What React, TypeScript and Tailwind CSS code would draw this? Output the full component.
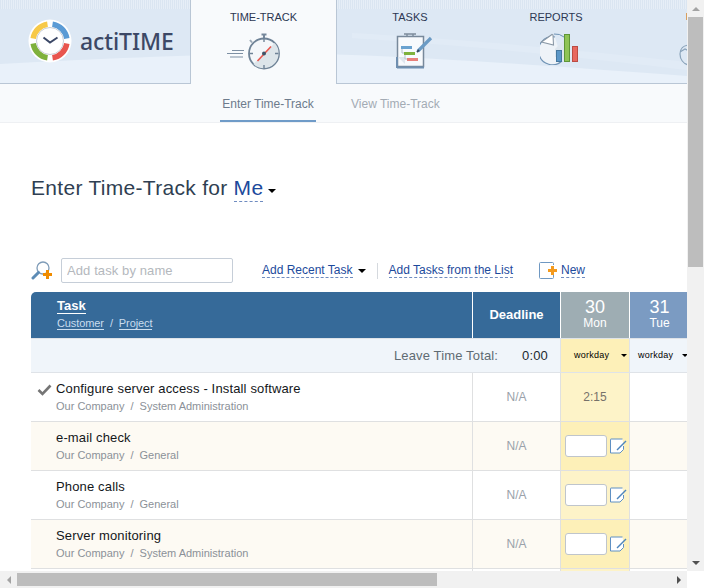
import type { ReactNode } from "react";

const sans = "font-['Liberation_Sans',Arial,sans-serif]";

function Logo() {
  return (
    <svg width="44" height="44" viewBox="0 0 44 44" className="shrink-0">
      <circle cx="22" cy="22" r="21.5" fill="#fff" />
      <g fill="none" strokeWidth="5.5">
        <path d="M5.2 19.5 A17 17 0 0 1 19.5 5.2" stroke="#f7c948" />
        <path d="M24.5 5.2 A17 17 0 0 1 38.8 19.5" stroke="#5b9bd5" />
        <path d="M38.8 24.5 A17 17 0 0 1 24.5 38.8" stroke="#e8554e" />
        <path d="M19.5 38.8 A17 17 0 0 1 5.2 24.5" stroke="#7fb13c" />
      </g>
      <circle cx="22" cy="22" r="13.5" fill="#fff" stroke="#c9ced6" strokeWidth="1" />
      <path d="M15.5 18.5 L22 23.5 L29.5 18.5" fill="none" stroke="#3b4766" strokeWidth="2" />
    </svg>
  );
}

function Stopwatch() {
  return (
    <svg width="54" height="38" viewBox="0 0 54 38">
      <path d="M5 17.5 H17 M0 20.5 H16 M3 24 H16" stroke="#7d8fa3" strokeWidth="1" fill="none" />
      <path d="M34.5 1.5 H39.5 M37 2 V5" stroke="#76889b" strokeWidth="2" fill="none" />
      <path d="M23 7 L25 9.5" stroke="#9aa8b6" strokeWidth="2" />
      <circle cx="37" cy="20.5" r="15" fill="#f4f7fa" stroke="#6f8397" strokeWidth="1.8" />
      <path d="M47.6 9.9 A15 15 0 0 1 26.4 31.1 Z" fill="#dde5ea" />
      <path d="M37 5.5 V9 M37 32 V35.5 M22.5 20.5 H26 M48 20.5 H51.5" stroke="#6f8397" strokeWidth="1.4" />
      <path d="M30.5 28 L44 13.5" stroke="#e8574f" strokeWidth="1.6" />
      <circle cx="37" cy="20.5" r="2" fill="#3e5468" />
    </svg>
  );
}

function Clipboard() {
  return (
    <svg width="38" height="36" viewBox="0 0 38 36">
      <path d="M1.5 3.5 H27.5 V33.5 H1.5 Z" fill="#f7fafd" stroke="#78899b" strokeWidth="1.5" />
      <path d="M1 34.5 H28 M1 24 V35" stroke="#6f8fb0" strokeWidth="2" />
      <path d="M8 1 H20 M11 3.5 V1 H17 V3.5" fill="none" stroke="#7c8b9b" strokeWidth="1.4" />
      <path d="M2 24 L9 24 L9 31 Z" fill="#dfe6ee" />
      <rect x="5" y="13" width="11" height="3" fill="#69a2d0" />
      <rect x="8" y="19" width="11" height="3" fill="#7fb13c" />
      <rect x="11" y="25" width="11" height="3" fill="#e8807a" />
      <path d="M6 16 V20 H8 M9 22 V26 H11" stroke="#b4bfca" fill="none" />
      <path d="M22 18 L35 5" stroke="#6b9bc4" strokeWidth="3.2" />
      <path d="M21 19 L23 17" stroke="#33465a" strokeWidth="2" />
    </svg>
  );
}

function ChartIcon() {
  return (
    <svg width="38" height="32" viewBox="0 0 38 32">
      <path d="M15 4 A14 14 0 1 0 22 28" fill="#eef3f8" stroke="#6f93b5" strokeWidth="1.2" />
      <path d="M1.5 9 L12 1.5 L13 2 L13.5 12 Z" fill="#fff" stroke="#8a98a6" strokeWidth="1.1" />
      <path d="M14 1 A14 14 0 0 1 24 4" stroke="#6f93b5" fill="none" />
      <path d="M15 16 L26 5 V24 H15 Z" fill="#dde6ee" />
      <rect x="16.5" y="17.5" width="5" height="11" fill="#5b97c7" stroke="#45789f" />
      <rect x="24.5" y="1.5" width="5" height="27" fill="#8fc455" stroke="#5f9636" />
      <rect x="32.5" y="13.5" width="5" height="15" fill="#e8685f" stroke="#bb4c44" />
    </svg>
  );
}

function EditIcon() {
  return (
    <svg width="17" height="17" viewBox="0 0 17 17" className="shrink-0">
      <path d="M12.5 1 H1 A.5 .5 0 0 0 .5 1.5 V15 H10 L13.5 11.5 V8" fill="#fff" stroke="#5f90c4" strokeWidth="1" />
      <path d="M7 12 L16 3" stroke="#4f86bd" strokeWidth="1.5" />
    </svg>
  );
}

function Caret({ className }: { className?: string }) {
  return <span className={`inline-block h-0 w-0 border-x-[4px] border-t-[4px] border-x-transparent border-t-black ${className ?? ""}`} />;
}

function SmallCaret({ className }: { className?: string }) {
  return <span className={`inline-block h-0 w-0 border-x-[3px] border-t-[3px] border-x-transparent border-t-black ${className ?? ""}`} />;
}

function NavTab({ label, width, icon, iconClass }: { label: string; width: string; icon: ReactNode; iconClass?: string }) {
  return (
    <div className={`flex ${width} shrink-0 flex-col items-center pt-[11px]`}>
      <div className="text-[11px] leading-[13px] text-[#2c3752]">{label}</div>
      <div className={`mt-[9px] ${iconClass ?? ""}`}>{icon}</div>
    </div>
  );
}

function Header() {
  return (
    <div className="relative flex h-[84px] shrink-0 border-b border-[#b9c6d5] bg-[#dde8f4]">
      <svg className="absolute inset-0" width="687" height="83" viewBox="0 0 687 83">
        <path d="M0 64 C150 56 260 52 352 55 C480 60 600 70 687 76 V83 H0 Z" fill="#e9f1fa" />
        <path d="M352 33 C440 38 520 44 687 62 V70 C520 50 440 44 352 38 Z" fill="#e1ebf6" />
      </svg>
      <div className="absolute inset-x-0 top-0 h-[9px] bg-[repeating-linear-gradient(90deg,#dae5f1_0,#dae5f1_1px,#e6eef7_1px,#e6eef7_2px)]" />
      <div className="relative flex w-[191px] shrink-0 items-center border-r border-[#b9c6d5] pb-[1px] pl-[28px]">
        <Logo />
        <span className="ml-[8px] font-['Noto_Sans',sans-serif] text-[23px] font-medium leading-none tracking-[-0.1px] text-[#3c4866]">actiTIME</span>
      </div>
      <div className="relative z-10 -mb-px flex w-[145px] shrink-0 flex-col items-center bg-[#f8fafc] pt-[11px]">
        <div className="text-[11px] leading-[13px] text-[#2c3752]">TIME-TRACK</div>
        <div className="mt-[9px] pr-[19px]">
          <Stopwatch />
        </div>
      </div>
      <div className="relative flex flex-1 border-l border-[#b9c6d5]">
        <NavTab label="TASKS" width="w-[146px]" icon={<Clipboard />} iconClass="pl-[10px]" />
        <NavTab label="REPORTS" width="w-[146px]" icon={<ChartIcon />} iconClass="pl-[5px]" />
        <div className="absolute left-[349px] top-[13px] h-[7px] w-px bg-[#d8a060]" />
        <svg className="absolute left-[342px] top-[44px]" width="12" height="22" viewBox="0 0 12 22">
          <path d="M11 1 C4 1 1 5 1 10 C1 15 4 20 10 21 M1 8 L6 5 L10 7" fill="none" stroke="#8aa3ba" strokeWidth="1.2" />
        </svg>
      </div>
    </div>
  );
}

function SubNav() {
  return (
    <div className="flex h-[39px] shrink-0 border-b border-[#eef0f3] bg-[#f8fafc] pl-[220px] text-[12px]">
      <div className="flex h-[38px] w-[96px] items-center justify-center border-b-[2px] border-[#6f9bc8] pt-[3px] text-[#6d7b8c]">Enter Time-Track</div>
      <div className="ml-[35px] flex h-[38px] items-center pt-[2px] text-[#a3abb4]">View Time-Track</div>
    </div>
  );
}

function DashedLink({ children }: { children: ReactNode }) {
  return <span className="block border-b border-dashed border-[#6f8cc0] text-[12px] leading-[14px] text-[#1c4a9c]">{children}</span>;
}

function Toolbar() {
  return (
    <div className="ml-[31px] flex h-[25px] items-center">
      <svg width="22" height="21" viewBox="0 0 22 21" className="shrink-0">
        <circle cx="12" cy="8" r="6" fill="#fff" stroke="#7f9cb8" strokeWidth="1.3" />
        <path d="M7.5 12.5 L2 18" stroke="#5d8cb5" strokeWidth="3" strokeLinecap="round" />
        <path d="M16.5 10 V19 M12 14.5 H21" stroke="#f08c00" strokeWidth="3" />
      </svg>
      <input
        placeholder="Add task by name"
        className="ml-[8px] h-[25px] w-[172px] rounded-[2px] border border-[#c6ced8] px-[5px] text-[13px] tracking-[0.1px] outline-none placeholder:text-[#b4b8bd]"
      />
      <div className="ml-[29px] flex items-center">
        <DashedLink>Add Recent Task</DashedLink>
        <Caret className="ml-[5px]" />
      </div>
      <div className="ml-[11px] h-[16px] w-px bg-[#d5d9de]" />
      <div className="ml-[11px]">
        <DashedLink>Add Tasks from the List</DashedLink>
      </div>
      <svg width="18" height="17" viewBox="0 0 18 17" className="ml-[26px] shrink-0">
        <path d="M14.5 3 V1.5 A1 1 0 0 0 13.5 .5 H1.5 A1 1 0 0 0 .5 1.5 V15.5 A1 1 0 0 0 1.5 16.5 H13.5 A1 1 0 0 0 14.5 15.5 V13" fill="none" stroke="#6f98c2" />
        <path d="M13.5 4 V13 M9 8.5 H18" stroke="#f39a1e" strokeWidth="3" />
      </svg>
      <div className="ml-[4px]">
        <DashedLink>New</DashedLink>
      </div>
    </div>
  );
}

const cols = "grid grid-cols-[441px_88px_69px_88px]";

function TableHead() {
  return (
    <div className={`${cols} h-[46px] overflow-hidden rounded-tl-[5px] text-white`}>
      <div className="bg-[#366a99] pl-[26px] pt-[7px]">
        <div className="w-fit border-b border-white text-[13px] font-bold leading-[14px]">Task</div>
        <div className="mt-[3px] flex text-[11px] leading-[12px] tracking-[-0.1px] text-[#c9dcee]">
          <span className="border-b border-[#c9dcee]">Customer</span>
          <span className="mx-[6px]">/</span>
          <span className="border-b border-[#c9dcee]">Project</span>
        </div>
      </div>
      <div className="flex items-center justify-center border-l border-white bg-[#366a99] text-[13px] font-bold">Deadline</div>
      <div className="flex flex-col items-center border-l border-white bg-[#9eadb3] pt-[6px]">
        <div className="text-[18px] leading-[18px]">30</div>
        <div className="text-[12px] leading-[15px]">Mon</div>
      </div>
      <div className="flex flex-col items-center border-l border-white bg-[#7b9bc2] pr-[28px] pt-[6px]">
        <div className="text-[18px] leading-[18px]">31</div>
        <div className="text-[12px] leading-[15px]">Tue</div>
      </div>
    </div>
  );
}

function LeaveRow() {
  return (
    <div className={`${cols} h-[35px] border-y border-[#dfe3e8] bg-[#f0f5fa]`}>
      <div className="col-span-2 flex items-center justify-end pr-[12px] text-[13px] tracking-[0.15px]">
        <span className="text-[#5f6b73]">Leave Time Total:</span>
        <span className="ml-[24px] text-[#222a30]">0:00</span>
      </div>
      <div className="flex items-center border-l border-[#dfe3e8] bg-[#fdf0b8] pl-[13px] text-[9px] tracking-[0.25px]">
        <span>workday</span>
        <SmallCaret className="ml-[12px]" />
      </div>
      <div className="flex items-center border-l border-[#dfe3e8] pl-[8px] text-[9px] tracking-[0.25px]">
        <span>workday</span>
        <SmallCaret className="ml-[9px]" />
      </div>
    </div>
  );
}

type Task = { name: string; project: string; checked?: boolean; time?: string };

const tasks: Task[] = [
  { name: "Configure server access - Install software", project: "System Administration", checked: true, time: "2:15" },
  { name: "e-mail check", project: "General" },
  { name: "Phone calls", project: "General" },
  { name: "Server monitoring", project: "System Administration" },
];

function TaskRow({ task, tinted }: { task: Task; tinted: boolean }) {
  return (
    <div className={`${cols} h-[49px] border-b border-[#dfe0e1] ${tinted ? "bg-[#fdfaf3]" : "bg-white"}`}>
      <div className="relative pl-[25px] pt-[7px]">
        {task.checked && (
          <svg className="absolute left-[6px] top-[11px]" width="15" height="12" viewBox="0 0 15 12">
            <path d="M1.5 6 L5.5 10 L13.5 1.5" fill="none" stroke="#757575" strokeWidth="2.6" />
          </svg>
        )}
        <div className="text-[13px] leading-[17px] tracking-[0.15px] text-[#14171a]">{task.name}</div>
        <div className="mt-[2px] flex text-[11px] leading-[15px] text-[#8b9198]">
          Our Company<span className="mx-[6px]">/</span>
          {task.project}
        </div>
      </div>
      <div className="flex items-center justify-center border-l border-[#dfe0e1] text-[12px] text-[#9aa2aa]">N/A</div>
      <div className={`flex items-center border-l border-[#dfe0e1] ${tinted ? "bg-[#fdf0b8]" : "bg-[#fdf3c8]"}`}>
        {task.time ? (
          <span className="w-full text-center text-[12px] text-[#76716a]">{task.time}</span>
        ) : (
          <div className="flex items-center pl-[4px]">
            <div className="h-[22px] w-[42px] rounded-[3px] border border-[#bfc5cc] bg-white" />
            <span className="ml-[3px]">
              <EditIcon />
            </span>
          </div>
        )}
      </div>
      <div className="border-l border-[#dfe0e1]" />
    </div>
  );
}

function ArrowBtn({ dir }: { dir: "up" | "down" | "left" | "right" }) {
  const tri = {
    up: "border-x-[4px] border-b-[4px] border-x-transparent border-b-[#a3a3a3]",
    down: "border-x-[4px] border-t-[4px] border-x-transparent border-t-[#505050]",
    left: "border-y-[4px] border-r-[4px] border-y-transparent border-r-[#a3a3a3]",
    right: "border-y-[4px] border-l-[4px] border-y-transparent border-l-[#505050]",
  }[dir];
  return (
    <div className="flex h-[17px] w-[17px] shrink-0 items-center justify-center">
      <span className={`h-0 w-0 ${tri}`} />
    </div>
  );
}

export default function App() {
  return (
    <div className={`flex h-[588px] w-[704px] flex-col overflow-hidden bg-white ${sans}`}>
      <div className="flex h-[571px]">
        <div className="h-[571px] w-[687px] overflow-hidden">
          <Header />
          <SubNav />
          <div className="ml-[31px] mt-[52px] flex h-[26px] items-center text-[21px] tracking-[0.3px] text-[#2f3f52]">
            Enter Time-Track for
            <span className="ml-[6px] border-b border-dashed border-[#6f8cc0] leading-[26px] text-[#1c4a9c]">Me</span>
            <Caret className="ml-[5px] mt-[6px]" />
          </div>
          <div className="h-[57px]" />
          <Toolbar />
          <div className="ml-[31px] mt-[9px] w-[687px]">
            <TableHead />
            <LeaveRow />
            {tasks.map((t, i) => (
              <TaskRow key={t.name} task={t} tinted={i % 2 === 1} />
            ))}
            <div className={`${cols} h-[10px]`}>
              <div />
              <div className="border-l border-[#dfe0e1]" />
              <div className="border-l border-[#dfe0e1] bg-[#fdf3c8]" />
              <div className="border-l border-[#dfe0e1]" />
            </div>
          </div>
        </div>
        <div className="flex w-[17px] shrink-0 flex-col bg-[#f1f1f1]">
          <ArrowBtn dir="up" />
          <div className="mx-auto h-[250px] w-[15px] bg-[#bdbdbd]" />
          <div className="flex-1" />
          <ArrowBtn dir="down" />
        </div>
      </div>
      <div className="flex h-[17px] bg-[#f1f1f1]">
        <ArrowBtn dir="left" />
        <div className="my-auto h-[13px] w-[420px] bg-[#bdbdbd]" />
        <div className="flex-1" />
        <ArrowBtn dir="right" />
        <div className="w-[17px] bg-white" />
      </div>
    </div>
  );
}
